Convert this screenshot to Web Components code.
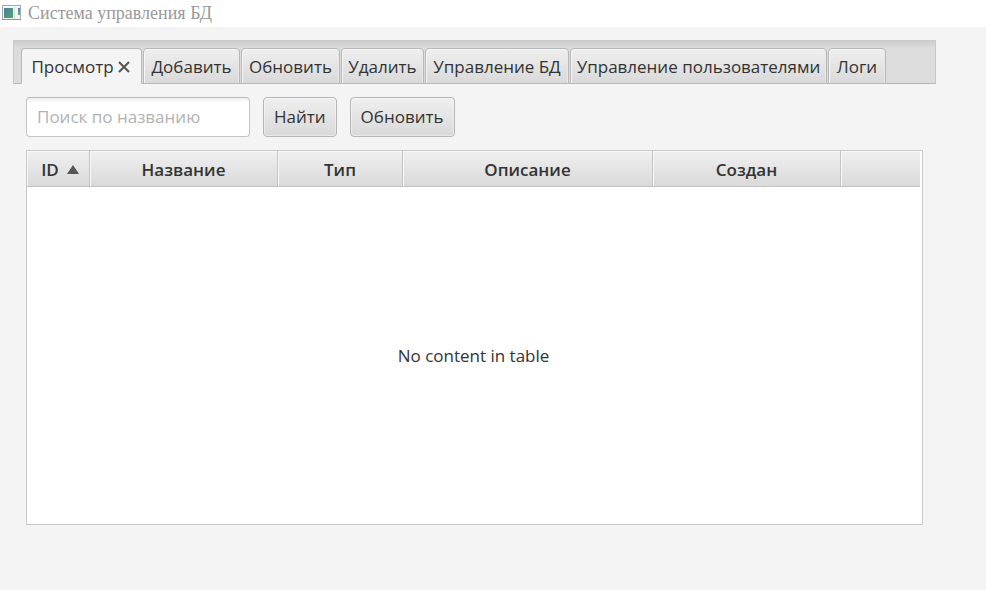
<!DOCTYPE html>
<html lang="ru">
<head>
<meta charset="utf-8">
<title>Система управления БД</title>
<style>
  body { margin: 0; background: #f4f4f4; color: #333; font: 17px/24px "Open Sans", "Noto Sans", sans-serif; }
</style>
</head>
<body>
<db-app></db-app>
<script>
const define = (name, html, setup) => {
  const template = document.createElement('template');
  template.innerHTML = html;
  customElements.define(name, class extends HTMLElement {
    constructor() {
      super();
      this.attachShadow({ mode: 'open' }).append(template.content.cloneNode(true));
    }
    connectedCallback() { if (setup) setup(this, this.shadowRoot); }
  });
};

define('title-bar', `
  <style>
    :host { display: flex; align-items: center; gap: 6px; height: 27px; padding: 0 0 2px 2px; background: #fff; box-sizing: border-box; }
    svg { display: block; flex: none; }
    h1 { margin: 0; font: 18px/24px "Liberation Serif", serif; color: #999; white-space: nowrap; }
  </style>
  <svg width="20" height="16" viewBox="0 0 20 16" aria-hidden="true">
    <defs>
      <linearGradient id="g" x1="0" y1="0" x2="1" y2="1"><stop offset="0" stop-color="#4a7fa0"/><stop offset="1" stop-color="#4fa56c"/></linearGradient>
      <linearGradient id="h" x1="0" y1="0" x2="0" y2="1"><stop offset="0" stop-color="#4a86b0"/><stop offset="1" stop-color="#67b27c"/></linearGradient>
    </defs>
    <rect x=".5" y=".5" width="18" height="14" fill="#f4f5f6" stroke="#a3a9ad"/>
    <path d="M0 14.500H19" stroke="#8b9196"/>
    <rect x="2" y="3" width="9" height="10" fill="url(#g)"/>
    <path d="M12.500 2V14" stroke="#d5d9dc"/>
    <rect x="16" y="3" width="2" height="7" fill="url(#h)"/>
  </svg>
  <h1><slot></slot></h1>`);

define('tab-strip', `
  <style>
    :host { display: grid; grid-template-columns: 121px 97px 99px 83px 144px 257px 58px; align-items: end; gap: 1px; height: 44px; padding: 0 7px; box-sizing: border-box;
      border: solid #c8c8c8; border-width: 0 1px;
      background: linear-gradient(#b5b5b5, #b5b5b5) bottom / 100% 1px no-repeat, linear-gradient(#cbcbcb, #dcdcdc 8px); }
  </style>
  <slot></slot>`);

define('tab-item', `
  <style>
    :host { display: flex; align-items: center; justify-content: center; height: 36px; padding-top: 2px; box-sizing: border-box;
      border: 1px solid #b8b8b8; border-radius: 4px 4px 0 0;
      background: linear-gradient(#efefef, #d9d9d9); box-shadow: inset 1px 1px #f6f6f6, inset -1px 0 #e8e8e8; }
    :host([selected]) { border-bottom-color: #f4f4f4; background: #f4f4f4; box-shadow: none; }
    button { display: block; padding: 0; border: 0; background: none; font: inherit; color: inherit; white-space: nowrap; }
    .close { display: none; padding: 0 2px 0 4px; }
    :host([closable]) .close { display: block; }
    svg { display: block; }
  </style>
  <button class="label" role="tab"><slot></slot></button>
  <button class="close" aria-label="Закрыть вкладку">
    <svg width="12" height="12" viewBox="0 0 12 12"><path d="M1 1L11 11M11 1L1 11" stroke="#555" stroke-width="2"/></svg>
  </button>`, (host, root) => {
    root.querySelector('.label').setAttribute('aria-selected', host.hasAttribute('selected'));
  });

define('search-field', `
  <style>
    :host { display: block; width: 224px; }
    input { display: block; width: 100%; height: 40px; padding: 0 10px 2px; box-sizing: border-box; font: inherit; color: #333;
      border: 1px solid #c4c4c4; border-top-color: #b8b8b8; border-radius: 4px; background: linear-gradient(#f0f0f0, #fff 5px); outline: none; }
    input::placeholder { color: #b2b2b2; opacity: 1; }
  </style>
  <input type="text" placeholder="Поиск по названию" aria-label="Поиск по названию">`);

define('push-button', `
  <style>
    :host { display: block; }
    button { display: block; height: 40px; padding: 0 10px; font: inherit; color: inherit; white-space: nowrap;
      border: 1px solid #b5b5b5; border-radius: 4px; background: linear-gradient(#efefef, #d9d9d9); box-shadow: inset 0 0 0 1px #ffffff66; }
  </style>
  <button type="button"><slot></slot></button>`);

define('data-table', `
  <style>
    :host { display: flex; flex-direction: column; border: 1px solid #c8c8c8; background: #fff; box-sizing: border-box; padding-right: 2px; }
    table { flex: 1; width: 100%; table-layout: fixed; border-collapse: separate; border-spacing: 0; }
    .id { width: 63px; } .m { width: 188px; } .s { width: 125px; } .l { width: 250px; }
    th { height: 36px; padding: 2px 0 0; box-sizing: border-box; font-weight: 600; text-align: center;
      border: solid #c4c4c4; border-width: 0 1px 1px 0; background: linear-gradient(#f0f0f0, #d9d9d9); box-shadow: inset 1px 1px #f8f8f8; }
    th:last-child { border-right: 0; }
    button { display: flex; align-items: center; justify-content: center; gap: 8px; width: 100%; padding: 0 0 0 4px; border: 0; background: none; font: inherit; color: inherit; }
    td { padding: 0; text-align: center; vertical-align: middle; }
  </style>
  <table>
    <colgroup><col class="id"><col class="m"><col class="s"><col class="l"><col class="m"><col></colgroup>
    <thead><tr>
      <th aria-sort="ascending"><button type="button">ID <svg width="12" height="9" viewBox="0 0 12 9" aria-hidden="true"><path d="M6 0L12 9H0Z" fill="#555"/></svg></button></th>
      <th>Название</th><th>Тип</th><th>Описание</th><th>Создан</th><th></th>
    </tr></thead>
    <tbody><tr><td colspan="6"><slot></slot></td></tr></tbody>
  </table>`);

define('db-app', `
  <style>
    :host { display: flex; flex-direction: column; min-height: 100vh; }
    main { flex: 1; display: flex; flex-direction: column; padding: 13px 50px 65px 13px; }
    section { flex: 1; display: flex; flex-direction: column; gap: 13px; padding: 13px 13px 0; }
    .bar { display: flex; gap: 13px; }
    data-table { flex: 1; }
  </style>
  <title-bar>Система управления БД</title-bar>
  <main>
    <tab-strip role="tablist">
      <tab-item selected closable>Просмотр</tab-item>
      <tab-item>Добавить</tab-item>
      <tab-item>Обновить</tab-item>
      <tab-item>Удалить</tab-item>
      <tab-item>Управление БД</tab-item>
      <tab-item>Управление пользователями</tab-item>
      <tab-item>Логи</tab-item>
    </tab-strip>
    <section>
      <div class="bar">
        <search-field></search-field>
        <push-button>Найти</push-button>
        <push-button>Обновить</push-button>
      </div>
      <data-table>No content in table</data-table>
    </section>
  </main>`);
</script>
</body>
</html>
